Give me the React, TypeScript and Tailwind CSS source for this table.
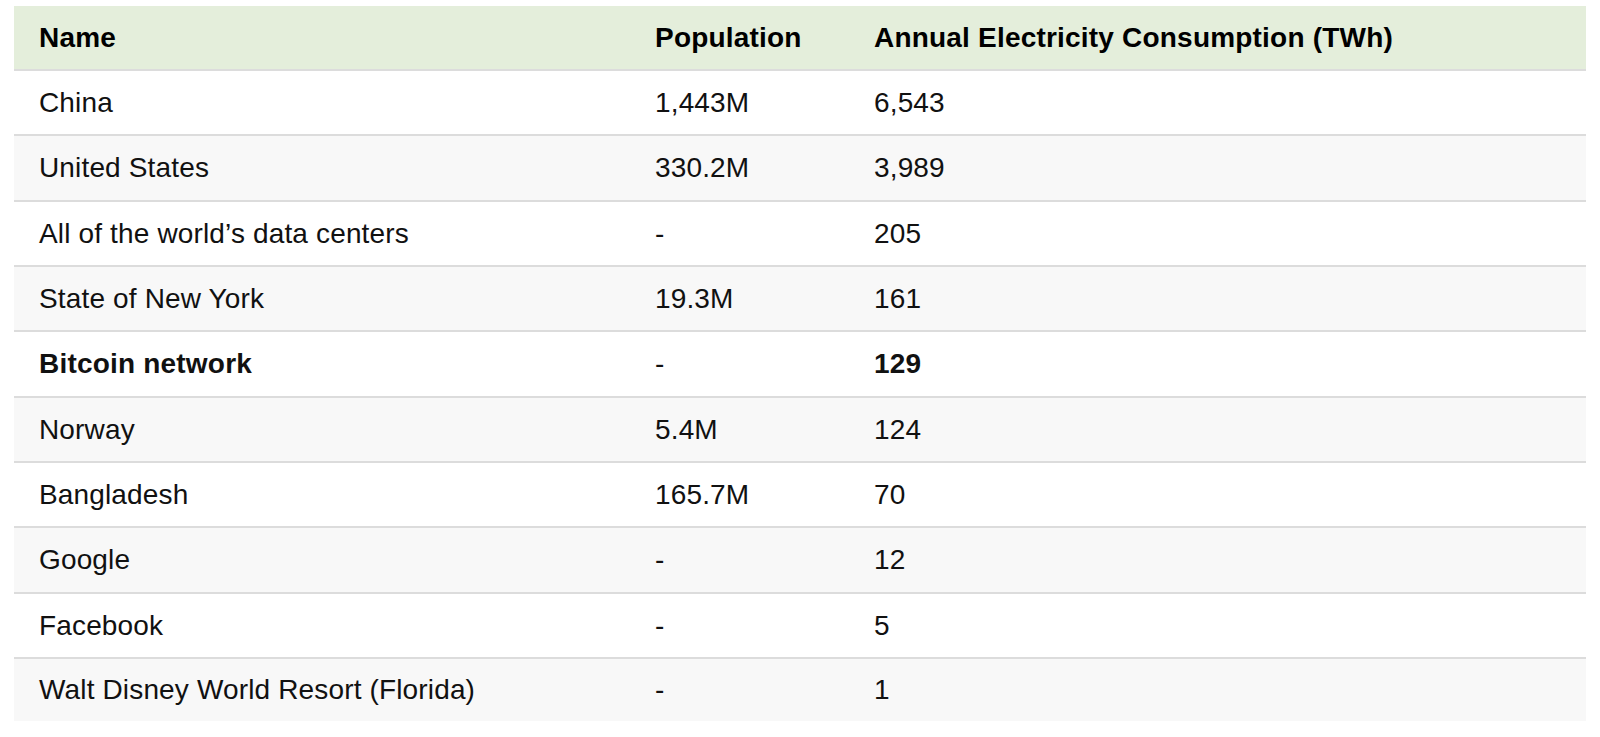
const rows: { name: string; pop: string; twh: string; bold?: boolean }[] = [
  { name: 'China', pop: '1,443M', twh: '6,543' },
  { name: 'United States', pop: '330.2M', twh: '3,989' },
  { name: 'All of the world’s data centers', pop: '-', twh: '205' },
  { name: 'State of New York', pop: '19.3M', twh: '161' },
  { name: 'Bitcoin network', pop: '-', twh: '129', bold: true },
  { name: 'Norway', pop: '5.4M', twh: '124' },
  { name: 'Bangladesh', pop: '165.7M', twh: '70' },
  { name: 'Google', pop: '-', twh: '12' },
  { name: 'Facebook', pop: '-', twh: '5' },
  { name: 'Walt Disney World Resort (Florida)', pop: '-', twh: '1' },
];

// row pitch in the picture is ~65.3px, so heights step 65/66
const heights = [
  'h-[65px]',
  'h-[66px]',
  'h-[65px]',
  'h-[65px]',
  'h-[66px]',
  'h-[65px]',
  'h-[65px]',
  'h-[66px]',
  'h-[65px]',
  'h-[64px]',
];

export default function App() {
  return (
    <div className="min-h-[737px] bg-white pt-[6px] pl-[14px] font-['Liberation_Sans',Arial,sans-serif] text-[28px] text-[#111]">
      <div className="w-[1572px]">
        {/* header */}
        <div className="grid h-[65px] grid-cols-[616px_219px_1fr] items-center border-b-2 border-[#dcdcdc] bg-[#e4eedb] font-bold tracking-[0.2px] text-black">
          <div className="pl-[25px]">Name</div>
          <div className="pl-[25px]">Population</div>
          <div className="pl-[25px]">Annual Electricity Consumption (TWh)</div>
        </div>

        {rows.map((r, i) => (
          <div
            key={r.name}
            className={
              'grid grid-cols-[616px_219px_1fr] items-center border-b-2 ' +
              heights[i] +
              (i % 2 === 1 ? ' bg-[#f8f8f8]' : ' bg-white') +
              (i === rows.length - 1 ? ' border-white' : ' border-[#dcdcdc]') +
              (r.bold ? ' font-bold tracking-[0.2px]' : ' tracking-[0.15px]')
            }
          >
            <div className="pl-[25px]">{r.name}</div>
            <div className="pl-[25px] font-normal tracking-[0.15px]">{r.pop}</div>
            <div className="pl-[25px]">{r.twh}</div>
          </div>
        ))}
      </div>
    </div>
  );
}
